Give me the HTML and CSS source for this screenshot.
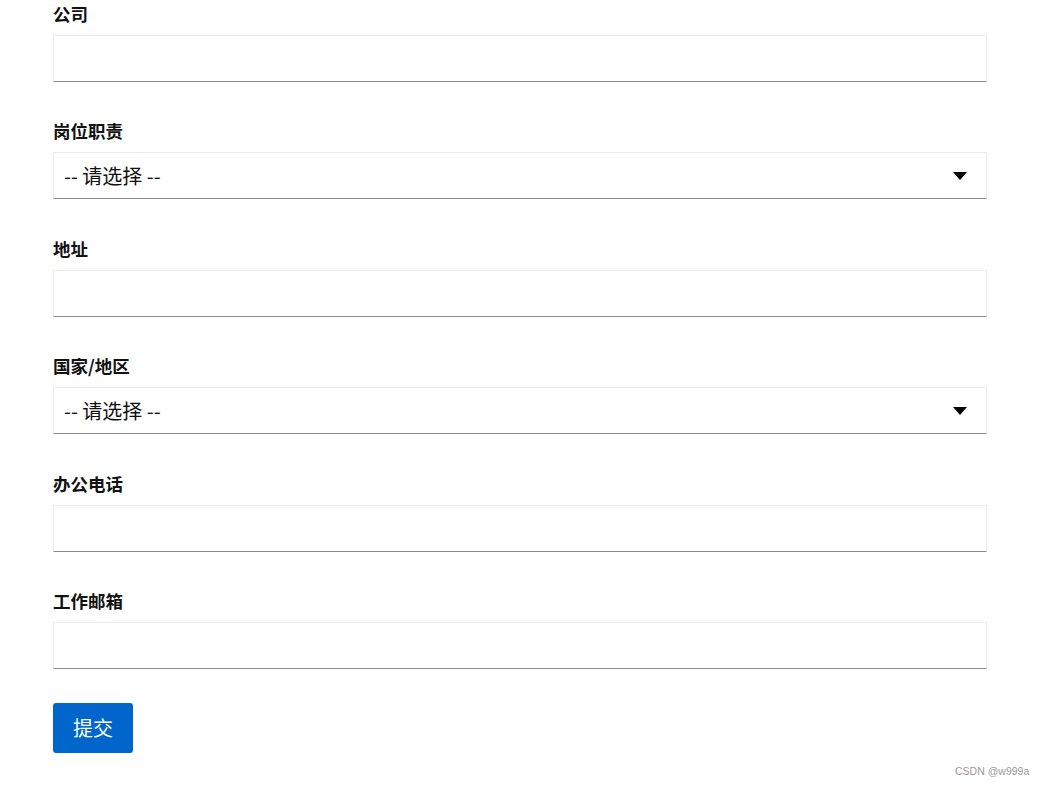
FILE: index.html
```html
<!DOCTYPE html>
<html lang="zh">
<head>
<meta charset="utf-8">
<link rel="stylesheet" href="styles.css">
</head>
<body>
<form class="form">
  <div class="field">
    <label class="label">公司</label>
    <input class="input" type="text">
  </div>
  <div class="field">
    <label class="label">岗位职责</label>
    <div class="select">
      <span class="select-text">-- 请选择 --</span>
      <svg class="arrow" width="14" height="8" viewBox="0 0 14 8"><path d="M0 0H14L7 8Z" fill="#000"/></svg>
    </div>
  </div>
  <div class="field">
    <label class="label">地址</label>
    <input class="input" type="text">
  </div>
  <div class="field">
    <label class="label">国家/地区</label>
    <div class="select">
      <span class="select-text">-- 请选择 --</span>
      <svg class="arrow" width="14" height="8" viewBox="0 0 14 8"><path d="M0 0H14L7 8Z" fill="#000"/></svg>
    </div>
  </div>
  <div class="field">
    <label class="label">办公电话</label>
    <input class="input" type="text">
  </div>
  <div class="field last">
    <label class="label">工作邮箱</label>
    <input class="input" type="text">
  </div>
  <button class="btn" type="button">提交</button>
</form>
<div class="watermark">CSDN @w999a</div>
</body>
</html>
```
FILE: styles.css
```css
html, body {
  margin: 0;
  padding: 0;
  background: #fff;
}
body {
  font-family: "Noto Sans CJK SC", "Noto Sans", sans-serif;
  color: #111;
  width: 1044px;
  height: 785px;
  overflow: hidden;
  position: relative;
}
.form {
  display: flex;
  flex-direction: column;
  align-items: flex-start;
  padding: 2px 0 0 53px;
  width: 934px;
}
.field {
  display: flex;
  flex-direction: column;
  width: 934px;
  margin-bottom: 37.4px;
}
.field.last {
  margin-bottom: 34px;
}
.label {
  font-size: 17.5px;
  font-weight: 700;
  line-height: 24px;
  height: 24px;
  margin-bottom: 9px;
  color: #111;
}
.input, .select {
  box-sizing: border-box;
  width: 934px;
  height: 47px;
  margin: 0;
  border: 1px solid #ececec;
  border-bottom: 1px solid #8c8c8c;
  background: #fff;
  outline: none;
  font-family: inherit;
}
.select {
  display: flex;
  align-items: center;
  justify-content: space-between;
  padding: 0 19px 0 10px;
}
.select-text {
  font-size: 20px;
  color: #111;
  line-height: 26px;
}
.arrow {
  display: block;
}
.btn {
  width: 80px;
  height: 50px;
  border: none;
  border-radius: 3px;
  background: #0066cc;
  color: #fff;
  font-family: inherit;
  font-size: 20px;
  padding: 0;
}
.watermark {
  position: absolute;
  left: 955px;
  top: 763px;
  font-family: "Liberation Sans", Arial, sans-serif;
  font-size: 10.5px;
  color: #9a9a9a;
  line-height: 16px;
}
```
